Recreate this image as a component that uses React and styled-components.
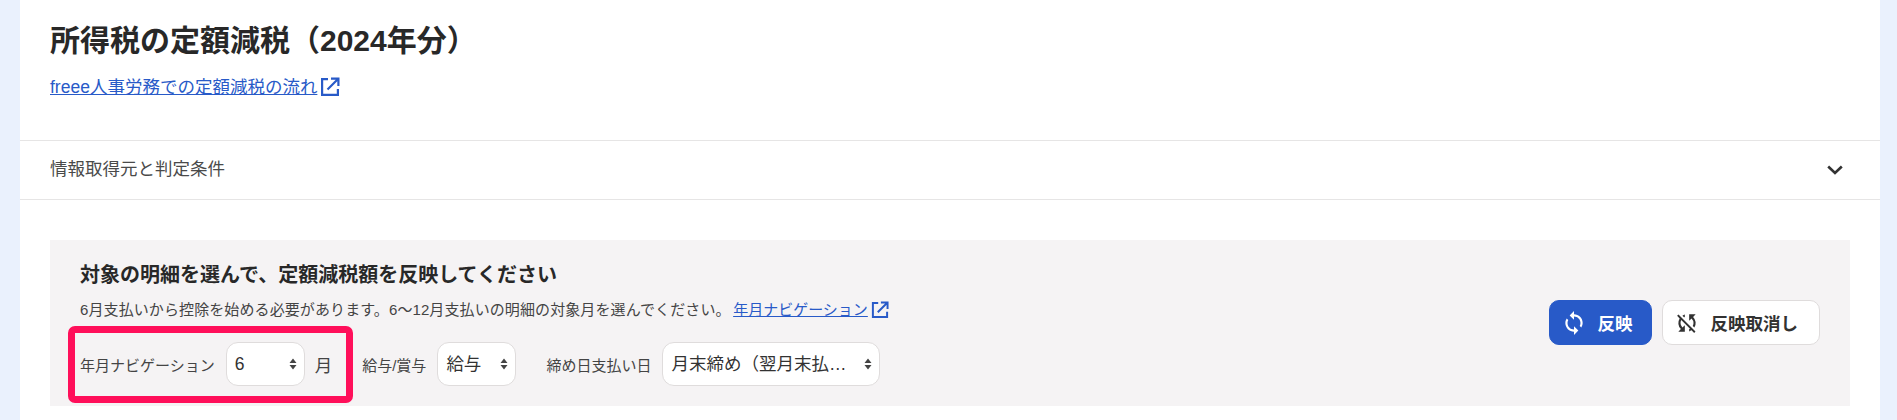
import React from 'react';
import styled, { createGlobalStyle } from 'styled-components';
import { MdSync, MdSyncDisabled } from 'react-icons/md';

const GlobalStyle = createGlobalStyle`
  html, body {
    margin: 0;
    height: 420px;
    overflow: hidden;
    background-color: #eaf1fd;
    color: #323232;
    font-family: "Liberation Sans", "Noto Sans CJK JP", sans-serif;
  }
`;

const Card = styled.main`
  margin: 0 17px 0 20px;
  height: 420px;
  background-color: #fff;
  overflow: hidden;
`;

const Header = styled.header`
  height: 140px;
  padding: 21px 30px 0;
  box-sizing: border-box;
`;

const Title = styled.h1`
  margin: 0;
  font-size: 30px;
  line-height: 40px;
  font-weight: 700;
  color: #282828;
`;

const TextLink = styled.a`
  display: inline-flex;
  align-items: center;
  color: #285ac8;
  font-size: ${(p) => p.$size}px;
  line-height: 24px;
  cursor: pointer;

  span {
    text-decoration: underline;
  }

  svg {
    flex: none;
    margin-left: ${(p) => p.$gap}px;
  }
`;

const HeaderLink = styled(TextLink)`
  margin-top: 14px;
`;

const Accordion = styled.button`
  display: flex;
  align-items: center;
  justify-content: space-between;
  box-sizing: content-box;
  width: calc(100% - 67px);
  height: 58px;
  padding: 0 37px 0 30px;
  background: none;
  border: none;
  border-top: 1px solid #e6e5e5;
  border-bottom: 1px solid #e6e5e5;
  color: #4a4a4a;
  font: inherit;
  font-size: 17.5px;
`;

const AccordionLabel = styled.span`
  margin-bottom: 6px;
`;

const Section = styled.section`
  padding: 40px 30px 0;
`;

const Panel = styled.div`
  display: flex;
  align-items: center;
  justify-content: space-between;
  box-sizing: border-box;
  height: 166px;
  padding: 0 30px;
  background-color: #f5f3f4;
`;

const PanelBody = styled.div`
  display: flex;
  flex-direction: column;
`;

const PanelTitle = styled.h2`
  margin: 0 0 8px;
  font-size: 20px;
  line-height: 30px;
  font-weight: 700;
  color: #282828;
`;

const Note = styled.p`
  display: flex;
  align-items: center;
  margin: 0 0 20.5px;
  font-size: 15px;
  line-height: 24px;
  letter-spacing: 0.1px;
  color: #444;
`;

const NoteLink = styled(TextLink)`
  margin-left: 2.5px;
  letter-spacing: 0;
`;

const FilterRow = styled.div`
  position: relative;
  display: flex;
  align-items: center;
  height: 44px;
`;

const Highlight = styled.div`
  position: absolute;
  left: -12px;
  top: -16px;
  width: 285px;
  height: 77px;
  box-sizing: border-box;
  border: 7px solid #ff0f5a;
  border-radius: 7px;
  pointer-events: none;
`;

const Label = styled.label`
  font-size: 15px;
  color: #444;
  margin-left: ${(p) => p.$offset || 0}px;
  margin-right: 11px;
`;

const Unit = styled.span`
  font-size: 17.5px;
  color: #444;
  margin-left: 10px;
  margin-right: 30px;
`;

const SelectBox = styled.div`
  position: relative;
  width: ${(p) => p.$width}px;
  height: 44px;

  svg {
    position: absolute;
    right: 8px;
    top: 16px;
    pointer-events: none;
  }
`;

const Select = styled.select`
  appearance: none;
  width: 100%;
  height: 100%;
  box-sizing: border-box;
  padding: 0 22px 0 8px;
  background-color: #fff;
  border: 1px solid #dfdcdc;
  border-radius: 12px;
  color: #323232;
  font: inherit;
  font-size: 17.5px;
  text-overflow: ellipsis;
`;

const Actions = styled.div`
  display: flex;
  gap: 10px;
  margin-bottom: 1px;
`;

const Button = styled.button`
  display: flex;
  align-items: center;
  gap: 11px;
  width: ${(p) => p.$width}px;
  height: 45px;
  padding: 0 0 0 10.5px;
  box-sizing: border-box;
  border-radius: 10px;
  border: 1px solid ${(p) => (p.$primary ? '#285ac8' : '#dfdcdc')};
  background-color: ${(p) => (p.$primary ? '#285ac8' : '#fff')};
  color: ${(p) => (p.$primary ? '#fff' : '#323232')};
  font: inherit;
  font-size: 17.5px;
  font-weight: 700;
`;

function ExternalIcon({ size }) {
  return (
    <svg width={size} height={size} viewBox="0 0 20 20" fill="none" stroke="#285ac8" strokeWidth="2.2">
      <path d="M8 2.1H2.1v15.8h15.8V12" />
      <path d="M7.5 12.5 17.5 2.5M11 1.6h7.4V9" />
    </svg>
  );
}

function SelectArrows() {
  return (
    <svg width="8" height="12" viewBox="0 0 8 12" fill="#444">
      <path d="M4 0.5 7.5 5H0.5zM4 11.5 0.5 7h7z" />
    </svg>
  );
}

function ChevronIcon() {
  return (
    <svg width="16" height="10" viewBox="0 0 16 10" fill="none" stroke="#323232" strokeWidth="2.6">
      <path d="M1.2 1.5 8 8 14.8 1.5" />
    </svg>
  );
}

function App() {
  return (
    <Card>
      <GlobalStyle />
      <Header>
        <Title>所得税の定額減税（2024年分）</Title>
        <HeaderLink $size={17.5} $gap={3}>
          <span>freee人事労務での定額減税の流れ</span>
          <ExternalIcon size={20} />
        </HeaderLink>
      </Header>
      <Accordion>
        <AccordionLabel>情報取得元と判定条件</AccordionLabel>
        <ChevronIcon />
      </Accordion>
      <Section>
        <Panel>
          <PanelBody>
            <PanelTitle>対象の明細を選んで、定額減税額を反映してください</PanelTitle>
            <Note>
              6月支払いから控除を始める必要があります。6～12月支払いの明細の対象月を選んでください。
              <NoteLink $size={15} $gap={3}>
                <span>年月ナビゲーション</span>
                <ExternalIcon size={18} />
              </NoteLink>
            </Note>
            <FilterRow>
              <Highlight />
              <Label>年月ナビゲーション</Label>
              <SelectBox $width={79}>
                <Select defaultValue="6">
                  <option value="6">6</option>
                </Select>
                <SelectArrows />
              </SelectBox>
              <Unit>月</Unit>
              <Label>給与/賞与</Label>
              <SelectBox $width={79}>
                <Select defaultValue="salary">
                  <option value="salary">給与</option>
                </Select>
                <SelectArrows />
              </SelectBox>
              <Label $offset={30}>締め日支払い日</Label>
              <SelectBox $width={218}>
                <Select defaultValue="end">
                  <option value="end">月末締め（翌月末払い）</option>
                </Select>
                <SelectArrows />
              </SelectBox>
            </FilterRow>
          </PanelBody>
          <Actions>
            <Button $primary $width={103}>
              <MdSync size={26} />
              反映
            </Button>
            <Button $width={158}>
              <MdSyncDisabled size={26} />
              反映取消し
            </Button>
          </Actions>
        </Panel>
      </Section>
    </Card>
  );
}

export default App;
